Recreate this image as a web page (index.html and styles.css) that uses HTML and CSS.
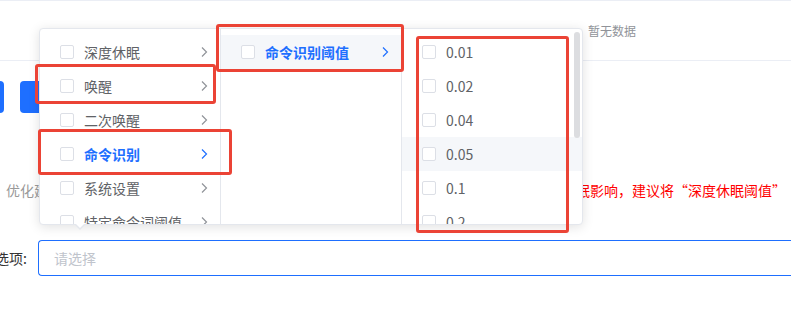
FILE: index.html
```html
<!DOCTYPE html>
<html lang="zh-CN">
  <head>
    <meta charset="UTF-8" />
    <title>命令识别阈值</title>
    <link rel="stylesheet" href="styles.css">
  </head>
  <body>
    <div class="table-head">
      <span class="empty">暂无数据</span>
    </div>

    <div class="toolbar">
      <button class="btn btn-first"></button>
      <button class="btn btn-second"></button>
    </div>

    <div class="tip">
      <span class="tip-label">优化建议：</span>
      <span class="tip-warn">为避免受深度休眠影响，建议将“深度休眠阈值”</span>
    </div>

    <div class="field">
      <label class="field-label">选项:</label>
      <div class="select">请选择</div>
    </div>

    <!-- 级联下拉面板 -->
    <div class="cascader">
      <div class="menu">
        <ul>
          <li class="item"><span class="check"></span>深度休眠<svg class="arrow" viewBox="0 0 12 12"><path d="M4 1.5L8.5 6L4 10.5" /></svg></li>
          <li class="item"><span class="check"></span>唤醒<svg class="arrow" viewBox="0 0 12 12"><path d="M4 1.5L8.5 6L4 10.5" /></svg></li>
          <li class="item"><span class="check"></span>二次唤醒<svg class="arrow" viewBox="0 0 12 12"><path d="M4 1.5L8.5 6L4 10.5" /></svg></li>
          <li class="item active"><span class="check"></span>命令识别<svg class="arrow" viewBox="0 0 12 12"><path d="M4 1.5L8.5 6L4 10.5" /></svg></li>
          <li class="item"><span class="check"></span>系统设置<svg class="arrow" viewBox="0 0 12 12"><path d="M4 1.5L8.5 6L4 10.5" /></svg></li>
          <li class="item"><span class="check"></span>特定命令词阈值<svg class="arrow" viewBox="0 0 12 12"><path d="M4 1.5L8.5 6L4 10.5" /></svg></li>
        </ul>
      </div>
      <div class="menu">
        <ul>
          <li class="item active hover"><span class="check"></span>命令识别阈值<svg class="arrow" viewBox="0 0 12 12"><path d="M4 1.5L8.5 6L4 10.5" /></svg></li>
        </ul>
      </div>
      <div class="menu">
        <ul>
          <li class="item"><span class="check"></span>0.01</li>
          <li class="item"><span class="check"></span>0.02</li>
          <li class="item"><span class="check"></span>0.04</li>
          <li class="item hover"><span class="check"></span>0.05</li>
          <li class="item"><span class="check"></span>0.1</li>
          <li class="item"><span class="check"></span>0.2</li>
          <li class="item"><span class="check"></span>0.3</li>
        </ul>
        <span class="scrollbar"></span>
      </div>
      <span class="popper-arrow"></span>
    </div>

    <!-- 标注框 -->
    <div class="mark mark-wake"></div>
    <div class="mark mark-cmd"></div>
    <div class="mark mark-threshold"></div>
    <div class="mark mark-values"></div>
  </body>
</html>
```

FILE: styles.css
```css
body {
  margin: 0;
  font-size: 14px;
  font-family: "Noto Sans CJK SC", "Liberation Sans", sans-serif;
  color: #606266;
  background: #fff;
  overflow: hidden;
}

.table-head {
  display: flex;
  align-items: center;
  height: 59px;
  padding-left: 588px;
  border-top: 1px solid #ebeef5;
  border-bottom: 1px solid #ebeef5;
}

.empty {
  font-size: 12px;
  color: #909399;
}

.toolbar {
  display: flex;
  gap: 16px;
  margin: 20px 0 0 -60px;
}

.btn {
  height: 32px;
  border: none;
  border-radius: 4px;
  background: #1e6fff;
}

.btn-first {
  width: 64px;
}

.btn-second {
  width: 90px;
}

.tip {
  display: flex;
  justify-content: space-between;
  margin-top: 67px;
  padding: 0 5px 0 6px;
  line-height: 20px;
  white-space: nowrap;
}

.tip-label {
  color: #999;
}

.tip-warn {
  color: #ff0000;
}

.field {
  display: flex;
  align-items: center;
  gap: 11px;
  margin-top: 40px;
  margin-left: -5px;
}

.field-label {
  color: #333;
  white-space: nowrap;
}

.select {
  flex: 1;
  height: 34px;
  line-height: 34px;
  padding-left: 15px;
  border: 1px solid #1e6fff;
  border-right: none;
  border-radius: 4px 0 0 4px;
  color: #c0c4cc;
}

/* 级联面板 */
.cascader {
  position: absolute;
  left: 39px;
  top: 28px;
  display: flex;
  background: #fff;
  border: 1px solid #e4e7ed;
  border-radius: 4px;
  box-shadow: 0 2px 12px rgba(0, 0, 0, 0.12);
}

.menu {
  position: relative;
  width: 180px;
  height: 195px;
  overflow: hidden;
  border-right: 1px solid #e4e7ed;
}

.menu:last-of-type {
  border-right: none;
}

.menu ul {
  margin: 0;
  padding: 6px 0;
  list-style: none;
}

.item {
  position: relative;
  display: flex;
  align-items: center;
  height: 34px;
  padding: 0 20px;
  color: #606266;
}

.item.hover {
  background: #f5f7fa;
}

.item.active {
  color: #1e6fff;
  font-weight: bold;
}

.check {
  width: 12px;
  height: 12px;
  margin-right: 10px;
  border: 1px solid #dcdfe6;
  border-radius: 2px;
  background: #fff;
}

.arrow {
  position: absolute;
  right: 10px;
  top: 11px;
  width: 12px;
  height: 12px;
  fill: none;
  stroke: #909399;
  stroke-width: 1.2;
}

.item.active .arrow {
  stroke: #1e6fff;
}

.scrollbar {
  position: absolute;
  right: 2px;
  top: 3px;
  width: 6px;
  height: 106px;
  border-radius: 3px;
  background: #dcdde0;
}

.popper-arrow {
  position: absolute;
  left: 34px;
  top: 100%;
  width: 0;
  height: 0;
  border-left: 6px solid transparent;
  border-right: 6px solid transparent;
  border-top: 6px solid #e4e7ed;
}

.popper-arrow::after {
  content: "";
  position: absolute;
  left: -5px;
  top: -7px;
  border-left: 5px solid transparent;
  border-right: 5px solid transparent;
  border-top: 5px solid #fff;
}

/* 红色标注框 */
.mark {
  position: absolute;
  box-sizing: border-box;
  border: 3px solid #eb4335;
  border-radius: 3px;
}

.mark-wake {
  left: 35px;
  top: 64px;
  width: 181px;
  height: 40px;
}

.mark-cmd {
  left: 38px;
  top: 129px;
  width: 194px;
  height: 46px;
}

.mark-threshold {
  left: 216px;
  top: 24px;
  width: 188px;
  height: 48px;
}

.mark-values {
  left: 416px;
  top: 36px;
  width: 153px;
  height: 197px;
}
```
